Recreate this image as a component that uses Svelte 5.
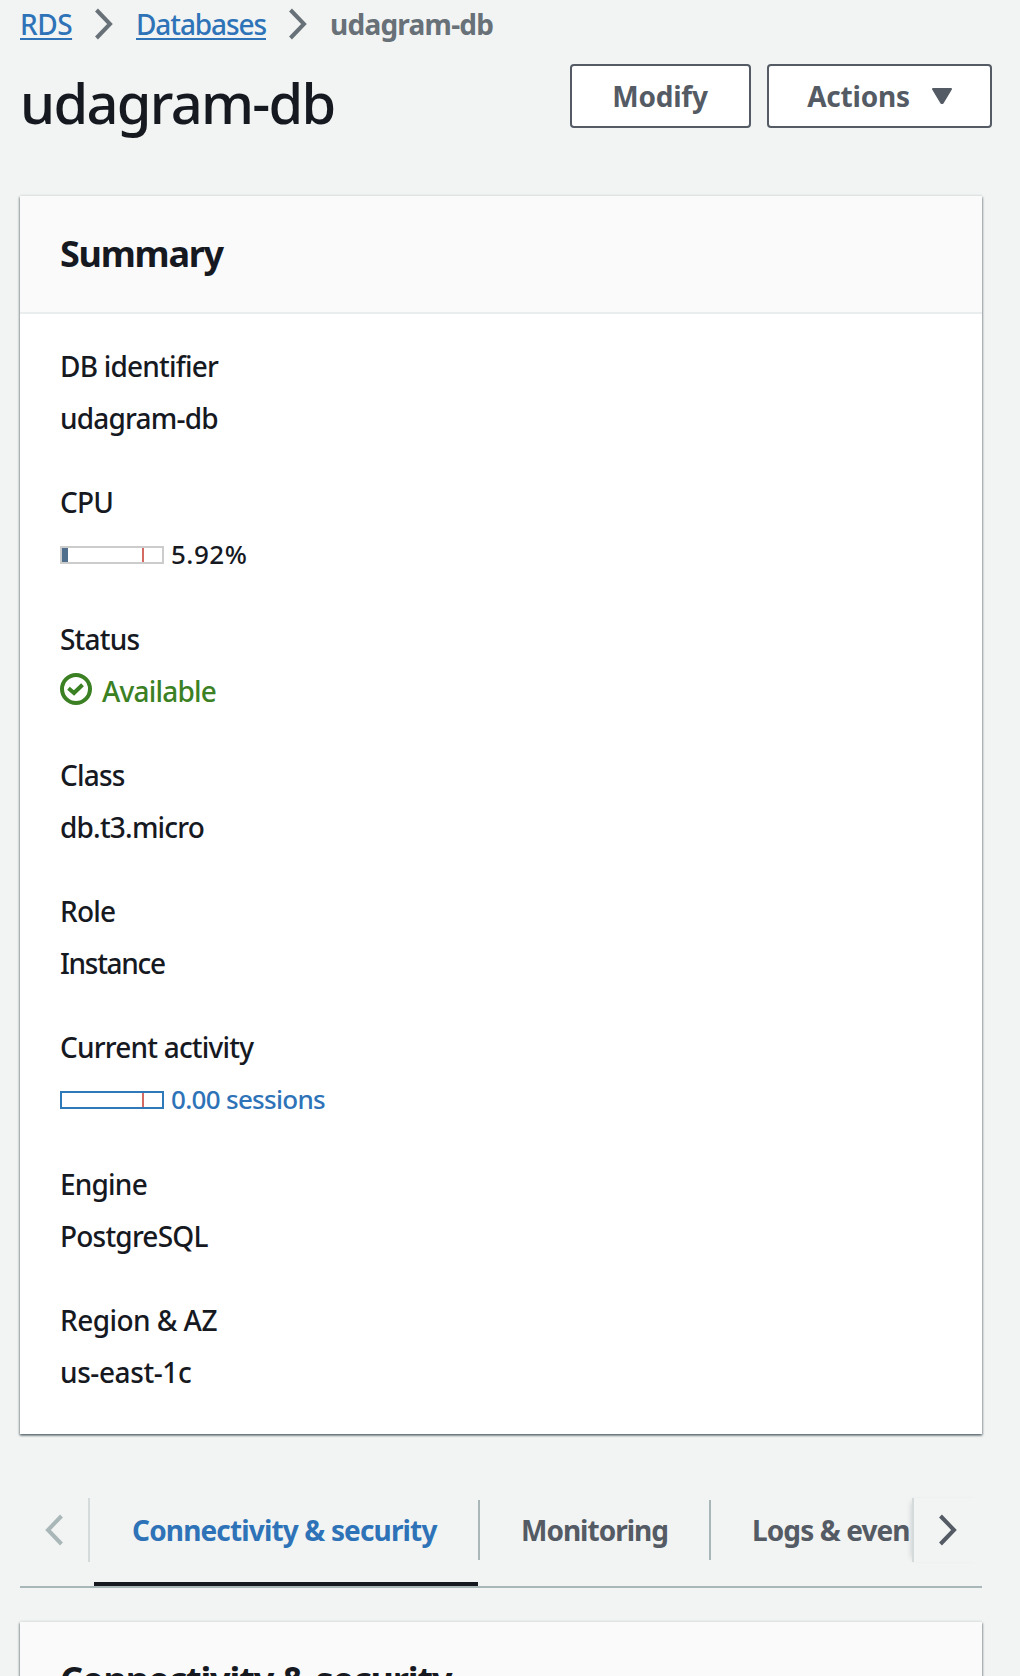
<script>
  const fields = [
    { label: 'DB identifier', value: 'udagram-db', kind: 'text' },
    { label: 'CPU', value: '5.92%', kind: 'gauge', percent: 6 },
    { label: 'Status', value: 'Available', kind: 'status' },
    { label: 'Class', value: 'db.t3.micro', kind: 'text' },
    { label: 'Role', value: 'Instance', kind: 'text', spacing: 'tight' },
    { label: 'Current activity', value: '0.00 sessions', kind: 'gauge', percent: 0, link: true },
    { label: 'Engine', value: 'PostgreSQL', kind: 'text' },
    { label: 'Region & AZ', value: 'us-east-1c', kind: 'text', spacing: 'loose' },
  ];
</script>

{#snippet chevron(left)}
  <svg class="chevron" width="20" height="32" viewBox="0 0 20 32" fill="none" stroke="currentColor" stroke-width="4">
    <path d={left ? 'M17.5 2L4 16L17.5 30' : 'M2.5 2L16 16L2.5 30'} />
  </svg>
{/snippet}

<div class="page">
  <nav class="crumbs">
    <a class="rds" href="#rds">RDS</a>
    {@render chevron(false)}
    <a class="databases" href="#databases">Databases</a>
    {@render chevron(false)}
    <span class="current">udagram-db</span>
  </nav>

  <header class="top">
    <h1>udagram-db</h1>
    <div class="buttons">
      <button class="modify">Modify</button>
      <button class="actions">
        <span>Actions</span>
        <svg width="20" height="16" viewBox="0 0 20 16" fill="currentColor" stroke="currentColor" stroke-width="2" stroke-linejoin="round"><path d="M1 1H19L10.6 15H9.4Z" /></svg>
      </button>
    </div>
  </header>

  <section class="card summary">
    <div class="head"><h2>Summary</h2></div>
    <dl>
      {#each fields as f}
        <div class="field {f.kind} {f.spacing ?? ''}">
          <dt>{f.label}</dt>
          <dd class:link={f.link}>
            {#if f.kind === 'gauge'}
              <span class="bar"><span class="fill" style:width="{f.percent}%"></span><span class="mark"></span></span>
            {:else if f.kind === 'status'}
              <svg class="ok" width="32" height="32" viewBox="0 0 32 32" fill="none" stroke="currentColor" stroke-width="4"><circle cx="16" cy="16" r="14" /><path d="M8.5 15.3L14 20L22.5 11.7" /></svg>
            {/if}
            <span class="val">{f.value}</span>
          </dd>
        </div>
      {/each}
    </dl>
  </section>

  <div class="tabs">
    <div class="prev">{@render chevron(true)}</div>
    <div class="strip">
      <div class="tab active"><span>Connectivity &amp; security</span></div>
      <div class="tab"><span>Monitoring</span></div>
      <div class="tab"><span>Logs &amp; even</span></div>
    </div>
    <div class="next">{@render chevron(false)}</div>
  </div>

  <section class="card detail">
    <div class="head"><h2>Connectivity &amp; security</h2></div>
  </section>
</div>

<style>
  :global(body) { margin: 0; background: #f2f4f3; }
  .page {
    box-sizing: border-box; width: 1020px; height: 1676px; overflow: hidden;
    display: flex; flex-direction: column;
    padding: 0 38px 0 20px;
    background: #f2f4f3; color: #16191f;
    font: 500 28px/44px 'Noto Sans', 'Open Sans', sans-serif;
    letter-spacing: -0.8px;
  }
  h1, h2, dl, dd { margin: 0; }
  .crumbs { display: flex; flex: none; align-items: center; height: 48px; color: #687078; white-space: nowrap; }
  .crumbs a { color: #2e73b8; text-decoration: underline; text-decoration-thickness: 2px; text-underline-offset: 3px; text-decoration-skip-ink: none; }
  .rds { width: 52px; letter-spacing: -0.5px; }
  .databases { width: 130px; letter-spacing: -1.1px; }
  .chevron { display: block; flex: none; margin: 0 22px; }
  .current { font-weight: 700; letter-spacing: -0.75px; }
  .top { display: flex; flex: none; justify-content: space-between; height: 148px; margin-right: -10px; }
  h1 { font-size: 56px; font-weight: 500; line-height: 72px; letter-spacing: -1.7px; margin-top: 18px; }
  .buttons { display: flex; gap: 16px; margin-top: 16px; }
  button {
    box-sizing: border-box; height: 64px; padding: 0; display: flex; align-items: center; justify-content: center;
    background: #fff; border: 2px solid #545b64; border-radius: 4px; color: #545b64;
    font: inherit; font-weight: 700; letter-spacing: -0.2px;
  }
  .modify { width: 181px; padding-right: 1px; }
  .actions { width: 225px; gap: 22px; }
  .card { background: #fff; box-shadow: 0 2px 2px 0 rgba(0,28,36,.3), 1px 1px 2px 0 rgba(0,28,36,.3), -1px 1px 2px 0 rgba(0,28,36,.3), 0 -2px 0 #eaeded; flex: none; }
  .summary { height: 1238px; }
  .head { box-sizing: border-box; height: 118px; padding: 34px 40px; background: #fafafa; border-bottom: 2px solid #eaeded; }
  h2 { font-size: 36px; font-weight: 700; line-height: 48px; letter-spacing: -1.1px; white-space: nowrap; }
  .summary h2 { letter-spacing: -1.25px; }
  dl { padding: 30px 40px 0; }
  .field { height: 136px; }
  .gauge { height: 137px; }
  dt { height: 52px; }
  dd { display: flex; align-items: center; height: 44px; }
  .gauge .val { font-size: 26px; margin: -1px 0 0 7px; letter-spacing: 0.5px; }
  .gauge .link .val { letter-spacing: -0.7px; }
  .tight dd { letter-spacing: -1.3px; }
  .loose { letter-spacing: -0.55px; }
  .loose dd { letter-spacing: -0.4px; }
  .bar { position: relative; box-sizing: border-box; width: 104px; height: 18px; border: 2px solid #ccc; margin-top: 2px; }
  .fill { display: block; height: 100%; background: #506f8d; }
  .mark { position: absolute; top: 0; bottom: 0; left: 80px; width: 2px; background: #d46b62; }
  .link { color: #2e73b8; }
  .link .bar { border-color: #2e7ab8; }
  .status dd { color: #3b8123; }
  .ok { margin: -5px 10px 0 0; }
  .tabs { display: flex; flex: none; margin-top: 60px; height: 94px; box-sizing: border-box; border-bottom: 2px solid #aab7b8; color: #545b64; }
  .prev, .next { flex: none; box-sizing: border-box; height: 64px; margin-top: 4px; padding-top: 16px; }
  .prev { width: 70px; color: #aab7b8; border-right: 2px solid #d5dbdb; }
  .next { width: 70px; border-left: 2px solid #d5dbdb; box-shadow: -4px 0 6px -4px rgba(0,28,36,.2); }
  .prev .chevron { margin: 0 0 0 24px; }
  .next .chevron { margin: 0 0 0 24px; }
  .strip { display: flex; flex: 1; min-width: 0; overflow: hidden; padding-left: 4px; white-space: nowrap; font-weight: 700; letter-spacing: -0.85px; }
  .tab { flex: none; position: relative; box-sizing: border-box; padding: 14px 38px 0; }
  .tab::after { content: ''; position: absolute; right: 0; top: 6px; width: 2px; height: 60px; background: #aab7b8; }
  .active { color: #2e73b8; width: 386px; }
  .active::before { content: ''; position: absolute; left: 0; right: 2px; bottom: 0; height: 4px; background: #16191f; }
  .tab:nth-child(2) { width: 231px; padding-left: 41px; letter-spacing: -1px; }
  .tab:nth-child(3) { padding: 14px 0 0 41px; letter-spacing: -0.9px; }
  .tab:nth-child(3)::after { display: none; }
  .detail { margin-top: 34px; }
</style>
